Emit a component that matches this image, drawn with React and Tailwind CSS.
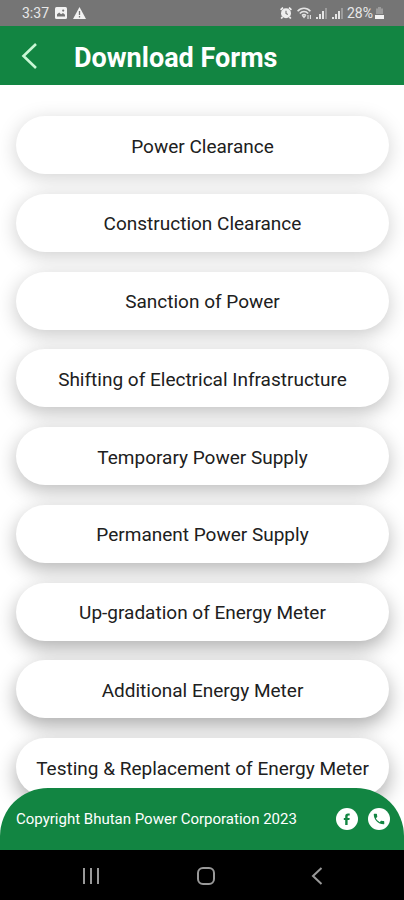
import React from "react";

const forms = [
  { name: "Power Clearance", shadow: "shadow-[0_4px_20px_rgba(0,0,0,0.18)]" },
  { name: "Construction Clearance", shadow: "shadow-[0_4px_20px_rgba(0,0,0,0.20)]" },
  { name: "Sanction of Power", shadow: "shadow-[0_5px_20px_rgba(0,0,0,0.22)]" },
  { name: "Shifting of Electrical Infrastructure", shadow: "shadow-[0_6px_20px_rgba(0,0,0,0.25)]" },
  { name: "Temporary Power Supply", shadow: "shadow-[0_6px_20px_rgba(0,0,0,0.27)]" },
  { name: "Permanent Power Supply", shadow: "shadow-[0_7px_20px_rgba(0,0,0,0.29)]" },
  { name: "Up-gradation of Energy Meter", shadow: "shadow-[0_8px_20px_rgba(0,0,0,0.31)]" },
  { name: "Additional Energy Meter", shadow: "shadow-[0_8px_20px_rgba(0,0,0,0.33)]" },
  { name: "Testing & Replacement of Energy Meter", shadow: "shadow-[0_8px_20px_rgba(0,0,0,0.33)]" },
];

function Signal() {
  return (
    <svg width="13" height="12" viewBox="0 0 13 12" fill="#e4e4e4" aria-hidden="true">
      <rect x="0" y="10" width="2" height="2" />
      <rect x="3" y="7" width="2" height="5" />
      <rect x="6" y="4" width="2" height="8" />
      <rect x="9" y="1" width="2" height="11" opacity="0.35" />
    </svg>
  );
}

function StatusBar() {
  return (
    <div className="flex h-[26px] items-center justify-between bg-[#757575] pr-5 pl-[22px] text-[14px] leading-4 text-[#e8e8e8]">
      <div className="flex items-center gap-[6px]">
        <span>3:37</span>
        <svg width="12" height="12" viewBox="0 0 12 12" aria-hidden="true">
          <rect width="12" height="12" rx="1.5" fill="#f2f2f2" />
          <path d="M2 9.5V7.2l2.2-1.6 1.9 1.7L8 6l2 1.7v1.8z" fill="#757575" />
          <circle cx="8.2" cy="3.6" r="1.1" fill="#757575" />
        </svg>
        <svg width="13" height="12" viewBox="0 0 13 12" aria-hidden="true">
          <path d="M6.5 0 13 12H0z" fill="#f2f2f2" />
          <path d="M6.5 4v4M6.5 9v1.4" stroke="#757575" strokeWidth="1.3" />
        </svg>
      </div>
      <div className="flex items-center">
        <svg className="mr-[5px]" width="12" height="12" viewBox="0 0 12 12" aria-hidden="true">
          <path d="M.6 2.800 3 .600M11.400 2.800 9 .600M2.500 10 1.200 11.500M9.500 10l1.300 1.500" stroke="#eee" strokeWidth="1.800" />
          <circle cx="6" cy="6.200" r="5" fill="#eee" />
          <path d="M6 3.800v2.700l1.800 1" fill="none" stroke="#757575" strokeWidth="1.100" />
        </svg>
        <svg className="mr-1" width="15" height="12" viewBox="0 0 15 12" fill="none" stroke="#e4e4e4" strokeWidth="1.600" aria-hidden="true">
          <path d="M.6 4.200C4.200.200 9.800.200 13.400 4.200M2.800 6.500c2.400-2.600 6-2.600 8.400 0M5 8.600c1.200-1.200 2.800-1.200 4 0" />
          <path d="M5 9h4L7 11.500z" fill="#e4e4e4" stroke="none" />
          <path d="M11 8v4M13.400 8v4" strokeWidth="1.100" />
        </svg>
        <Signal />
        <span className="w-[3px]" />
        <Signal />
        <span className="ml-[2px]">28%</span>
        <svg className="ml-[2px]" width="9" height="12" viewBox="0 0 9 12" aria-hidden="true">
          <path d="M3 0h3v1.500h2V7H1V1.500h2z" fill="#9b9b9b" />
          <path d="M0 8h9v4H0z" fill="#f2f2f2" />
        </svg>
      </div>
    </div>
  );
}

export default function App() {
  return (
    <div className="flex min-h-screen flex-col overflow-hidden bg-white font-['Roboto','Noto_Sans',sans-serif]">
      <StatusBar />
      <header className="flex h-[59px] items-center gap-9 bg-[#128542] pl-[21px] text-white">
        <button type="button" aria-label="Back">
          <svg width="17" height="28" viewBox="0 0 17 28" fill="none" stroke="#c9f7d5" strokeWidth="2.600" aria-hidden="true">
            <path d="M15 2 2.500 14 15 26" />
          </svg>
        </button>
        <h1 className="pt-1 text-[27px] leading-8 font-bold">Download Forms</h1>
      </header>

      <main className="flex grow flex-col justify-between gap-[19px] pt-[31px] pr-[15px] pl-4">
        {forms.map((form) => (
          <button
            key={form.name}
            type="button"
            className={`h-[58px] w-full shrink-0 rounded-full bg-white pt-[3px] text-[19px] leading-6 whitespace-nowrap text-[#202020] ${form.shadow}`}
          >
            {form.name}
          </button>
        ))}
      </main>

      <footer className="relative -mt-2 shrink-0">
        <div className="flex h-[62px] items-center justify-between rounded-t-[48px] bg-[#128542] pr-[14px] pl-4 text-white">
          <p className="text-[15px] leading-5">Copyright Bhutan Power Corporation 2023</p>
          <div className="flex gap-[10px]">
            <a href="#facebook" aria-label="Facebook" className="flex size-[22px] items-center justify-center rounded-full bg-white">
              <svg width="8" height="12" viewBox="0 0 8 12" aria-hidden="true">
                <path d="M2.200 12V7H.8V4.900h1.400V3.400C2.200 1.600 3.200.6 5 .6h1.700v2H5.600c-.7 0-1 .3-1 .9v1.400h2.100L6.400 7H4.600v5z" fill="#128542" />
              </svg>
            </a>
            <a href="#phone" aria-label="Phone" className="flex size-[22px] items-center justify-center rounded-full bg-white">
              <svg width="14" height="14" viewBox="0 0 24 24" fill="#128542" aria-hidden="true">
                <path d="M6.620 10.790c1.440 2.830 3.760 5.140 6.590 6.590l2.200-2.200c.27-.27.67-.36 1.020-.24 1.120.37 2.330.57 3.570.57.55 0 1 .45 1 1V20c0 .55-.45 1-1 1-9.390 0-17-7.610-17-17 0-.55.45-1 1-1h3.500c.55 0 1 .45 1 1 0 1.250.2 2.450.57 3.570.11.35.03.74-.25 1.020z" />
              </svg>
            </a>
          </div>
        </div>
        <nav className="flex h-[50px] items-center justify-between bg-black px-[81px] pt-[2px]">
          <button type="button" aria-label="Recent apps">
            <svg width="20" height="18" viewBox="0 0 20 18" stroke="#999" strokeWidth="2" aria-hidden="true">
              <path d="M3 1v16M10 1v16M17 1v16" />
            </svg>
          </button>
          <button type="button" aria-label="Home">
            <svg width="20" height="20" viewBox="0 0 20 20" fill="none" stroke="#999" strokeWidth="2" aria-hidden="true">
              <rect x="2" y="2" width="16" height="16" rx="5" />
            </svg>
          </button>
          <button type="button" aria-label="Back to previous screen">
            <svg width="12" height="20" viewBox="0 0 12 20" fill="none" stroke="#999" strokeWidth="2" aria-hidden="true">
              <path d="M10.500 2 2 10l8.500 8" />
            </svg>
          </button>
        </nav>
      </footer>
    </div>
  );
}
